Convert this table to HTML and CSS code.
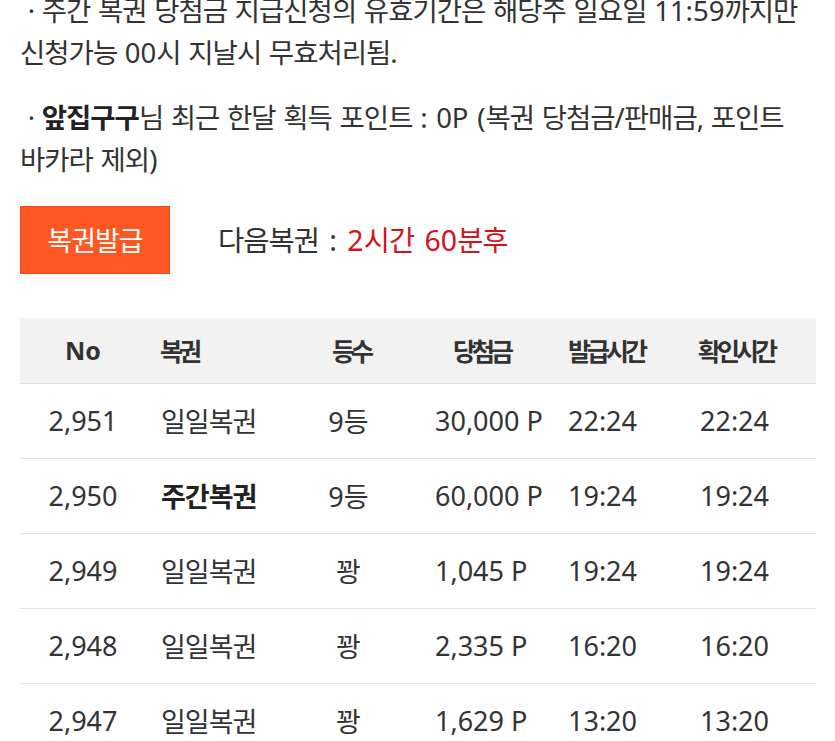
FILE: index.html
```html
<!DOCTYPE html>
<html lang="ko">
<head>
<meta charset="utf-8">
<title>복권</title>
<link rel="stylesheet" href="styles.css">
</head>
<body>
<div class="page">
  <div class="notice">
    <p class="note">&nbsp;· 주간 복권 당첨금 지급신청의 유효기간은 해당주 일요일 <span class="num">11:59</span>까지만<br>신청가능 <span class="num">00</span>시 지날시 무효처리됨.</p>
    <p class="note">&nbsp;· <b class="name">앞집구구</b>님 최근 한달 획득 포인트 <span class="num">: 0P (</span>복권 당첨금/판매금, 포인트<br>바카라 제외<span class="num">)</span></p>
  </div>

  <div class="action">
    <button class="issue-btn" type="button">복권발급</button>
    <div class="next">다음복권 <span class="num">:</span> <span class="remain"><span class="num">2</span>시간 <span class="num">60</span>분후</span></div>
  </div>

  <table class="list">
    <colgroup>
      <col class="c-no">
      <col class="c-kind">
      <col class="c-rank">
      <col class="c-prize">
      <col class="c-issue">
      <col class="c-check">
    </colgroup>
    <thead>
      <tr>
        <th class="h-no">No</th>
        <th class="h-kind">복권</th>
        <th class="h-rank">등수</th>
        <th class="h-prize">당첨금</th>
        <th class="h-issue">발급시간</th>
        <th class="h-check">확인시간</th>
      </tr>
    </thead>
    <tbody>
      <tr>
        <td class="d-no">2,951</td>
        <td class="d-kind">일일복권</td>
        <td class="d-rank"><span class="num">9</span>등</td>
        <td class="d-prize">30,000 P</td>
        <td class="d-issue">22:24</td>
        <td class="d-check">22:24</td>
      </tr>
      <tr>
        <td class="d-no">2,950</td>
        <td class="d-kind"><b>주간복권</b></td>
        <td class="d-rank"><span class="num">9</span>등</td>
        <td class="d-prize">60,000 P</td>
        <td class="d-issue">19:24</td>
        <td class="d-check">19:24</td>
      </tr>
      <tr>
        <td class="d-no">2,949</td>
        <td class="d-kind">일일복권</td>
        <td class="d-rank">꽝</td>
        <td class="d-prize">1,045 P</td>
        <td class="d-issue">19:24</td>
        <td class="d-check">19:24</td>
      </tr>
      <tr>
        <td class="d-no">2,948</td>
        <td class="d-kind">일일복권</td>
        <td class="d-rank">꽝</td>
        <td class="d-prize">2,335 P</td>
        <td class="d-issue">16:20</td>
        <td class="d-check">16:20</td>
      </tr>
      <tr>
        <td class="d-no">2,947</td>
        <td class="d-kind">일일복권</td>
        <td class="d-rank">꽝</td>
        <td class="d-prize">1,629 P</td>
        <td class="d-issue">13:20</td>
        <td class="d-check">13:20</td>
      </tr>
    </tbody>
  </table>
</div>
</body>
</html>
```

FILE: styles.css
```css
* { box-sizing: border-box; }

html, body {
  margin: 0;
  padding: 0;
  background: #ffffff;
}

body {
  font-family: "Noto Sans", "Noto Sans CJK KR", sans-serif;
  color: #333333;
  font-size: 27px;
}

.page {
  padding: 0 19px 0 20px;
  overflow: hidden;
}

.notice {
  margin-top: -10px;
}

.note {
  margin: 0 0 23px 0;
  font-size: 27.5px;
  line-height: 42px;
  letter-spacing: -1px;
  word-spacing: 1.5px;
  white-space: nowrap;
}

.note:last-child {
  margin-bottom: 0;
}

.num {
  letter-spacing: 0;
}

.name {
  font-weight: 700;
  color: #222222;
}

.action {
  display: flex;
  align-items: center;
  gap: 48px;
  margin-top: 25px;
}

.issue-btn {
  width: 150px;
  height: 68px;
  margin: 0;
  padding: 0;
  background: #ff5722;
  border: 1px solid #e3501f;
  color: #ffffff;
  font-family: inherit;
  font-size: 27px;
  letter-spacing: -1px;
  line-height: 1;
}

.next {
  font-size: 28.5px;
  letter-spacing: -1px;
  word-spacing: 4px;
  line-height: 42px;
}

.remain {
  color: #d2141f;
}

.list {
  width: 796px;
  margin-top: 44px;
  border-collapse: collapse;
  table-layout: fixed;
}

.c-no { width: 126px; }
.c-kind { width: 154px; }
.c-rank { width: 96px; }
.c-prize { width: 172px; }
.c-issue { width: 72px; }
.c-check { width: 176px; }

.list th {
  height: 65px;
  padding: 0;
  background: #f2f2f2;
  border-bottom: 1px solid #dedede;
  font-size: 25px;
  font-weight: 700;
  color: #333333;
  letter-spacing: -4px;
  text-align: left;
  white-space: nowrap;
}

.list th.h-no {
  letter-spacing: 0;
  text-align: center;
}

.list th.h-kind { padding-left: 14px; }
.list th.h-rank { text-align: center; padding-left: 6px; }
.list th.h-prize { padding-left: 57px; }
.list th.h-issue { padding-left: 0; }
.list th.h-check { padding-left: 58px; }

.list td {
  height: 75px;
  padding: 0;
  border-bottom: 1px solid #e3e3e3;
  font-size: 27px;
  color: #333333;
  text-align: left;
  white-space: nowrap;
}

.list td.d-no { text-align: center; }
.list td.d-kind { padding-left: 15px; letter-spacing: -1px; }
.d-kind b { font-weight: 700; color: #222222; }
.list td.d-rank { text-align: center; letter-spacing: -1px; }
.list td.d-prize { padding-left: 39px; }
.list td.d-issue { padding-left: 0; }
.list td.d-check { padding-left: 60px; }
```
